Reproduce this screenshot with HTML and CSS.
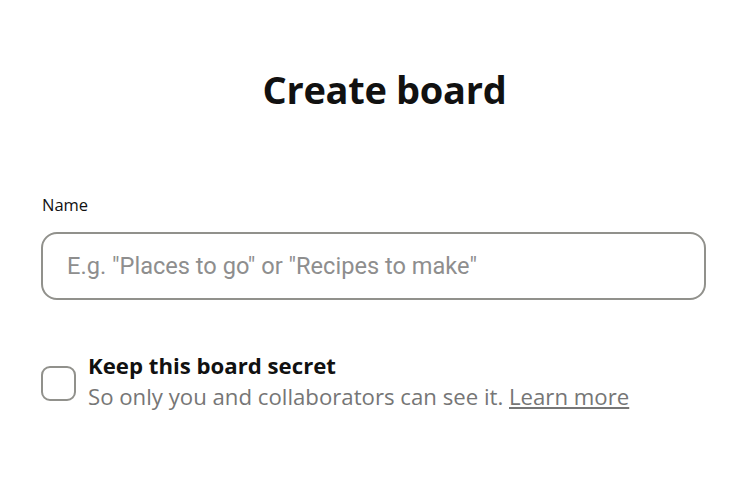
FILE: index.html
```html
<!DOCTYPE html>
<html>
<head>
<meta charset="utf-8">
<link rel="stylesheet" href="styles.css">
</head>
<body>
<main class="modal">
  <h1 class="title">Create board</h1>
  <form class="form">
    <label class="label" for="name">Name</label>
    <input class="input" id="name" type="text" placeholder="E.g. &quot;Places to go&quot; or &quot;Recipes to make&quot;">
    <div class="secret">
      <span class="checkbox"></span>
      <div class="secret-text">
        <div class="secret-title">Keep this board secret</div>
        <div class="secret-desc">So only you and collaborators can see it. <a class="link" href="#">Learn more</a></div>
      </div>
    </div>
  </form>
</main>
</body>
</html>
```
FILE: styles.css
```css
html, body {
  margin: 0;
  padding: 0;
  background: #ffffff;
}
.modal {
  width: 750px;
  height: 477px;
  box-sizing: border-box;
  padding: 0 44px 0 41px;
  font-family: "Open Sans", "Noto Sans", sans-serif;
  color: #111111;
  overflow: hidden;
}
.title {
  margin: 0;
  padding: 63px 0 0 22px;
  height: 128px;
  box-sizing: border-box;
  text-align: center;
  font-size: 38px;
  font-weight: 700;
  line-height: 52px;
  letter-spacing: -0.3px;
}
.form {
  display: flex;
  flex-direction: column;
  margin-top: 67px;
}
.label {
  font-size: 16.5px;
  line-height: 20px;
  padding-left: 1px;
  margin-bottom: 17px;
}
.input {
  height: 68px;
  box-sizing: border-box;
  border: 2px solid #91918c;
  border-radius: 16px;
  padding: 0 24px;
  font-family: Roboto, sans-serif;
  font-size: 23.6px;
  color: #111;
  outline: none;
}
.input::placeholder {
  color: #8e8e8e;
}
.secret {
  display: flex;
  align-items: center;
  gap: 12px;
  margin-top: 51px;
}
.checkbox {
  width: 35px;
  height: 35px;
  box-sizing: border-box;
  border: 2px solid #91918c;
  border-radius: 9px;
  flex: none;
  margin-top: 2px;
}
.secret-text {
  display: flex;
  flex-direction: column;
}
.secret-title {
  font-size: 22.2px;
  font-weight: 700;
  line-height: 30px;
}
.secret-desc {
  font-size: 22.2px;
  line-height: 32px;
  color: #767676;
}
.link {
  color: #767676;
  text-decoration: underline;
}
```
